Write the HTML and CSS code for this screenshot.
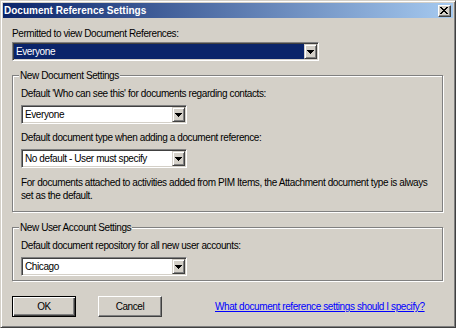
FILE: index.html
```html
<!DOCTYPE html>
<html lang="en">
<head>
  <meta charset="UTF-8" />
  <title>Document Reference Settings</title>
  <link rel="stylesheet" href="styles.css">
</head>
<body>

  <div class="window">
    <div class="titlebar">
      <span class="title">Document Reference Settings</span>
      <button class="close-btn" type="button" aria-label="Close">
        <svg width="8" height="7" viewBox="0 0 8 7" shape-rendering="crispEdges">
          <path d="M0 0h2v1H0z M6 0h2v1H6z M1 1h2v1H1z M5 1h2v1H5z M2 2h4v1H2z M3 3h2v1H3z M2 4h4v1H2z M1 5h2v1H1z M5 5h2v1H5z M0 6h2v1H0z M6 6h2v1H6z" fill="#000"/>
        </svg>
      </button>
    </div>

    <div class="content">
      <div class="row-label">Permitted to view Document References:</div>
      <div class="combo combo-wide is-active">
        <span class="combo-text">Everyone</span>
        <span class="combo-arrow">
          <svg width="7" height="4" viewBox="0 0 7 4" shape-rendering="crispEdges"><path d="M0 0h7v1H0z M1 1h5v1H1z M2 2h3v1H2z M3 3h1v1H3z" fill="#000"/></svg>
        </span>
      </div>

      <fieldset class="group group-docs">
        <legend>New Document Settings</legend>
        <div class="row-label">Default 'Who can see this' for documents regarding contacts:</div>
        <div class="combo">
          <span class="combo-text">Everyone</span>
          <span class="combo-arrow">
            <svg width="7" height="4" viewBox="0 0 7 4" shape-rendering="crispEdges"><path d="M0 0h7v1H0z M1 1h5v1H1z M2 2h3v1H2z M3 3h1v1H3z" fill="#000"/></svg>
          </span>
        </div>
        <div class="row-label">Default document type when adding a document reference:</div>
        <div class="combo">
          <span class="combo-text">No default - User must specify</span>
          <span class="combo-arrow">
            <svg width="7" height="4" viewBox="0 0 7 4" shape-rendering="crispEdges"><path d="M0 0h7v1H0z M1 1h5v1H1z M2 2h3v1H2z M3 3h1v1H3z" fill="#000"/></svg>
          </span>
        </div>
        <p class="note">For documents attached to activities added from PIM Items, the Attachment document type is always set as the default.</p>
      </fieldset>

      <fieldset class="group group-users">
        <legend>New User Account Settings</legend>
        <div class="row-label">Default document repository for all new user accounts:</div>
        <div class="combo">
          <span class="combo-text">Chicago</span>
          <span class="combo-arrow">
            <svg width="7" height="4" viewBox="0 0 7 4" shape-rendering="crispEdges"><path d="M0 0h7v1H0z M1 1h5v1H1z M2 2h3v1H2z M3 3h1v1H3z" fill="#000"/></svg>
          </span>
        </div>
      </fieldset>

      <div class="actions">
        <button class="btn btn-default" type="button">OK</button>
        <button class="btn" type="button">Cancel</button>
        <a class="help-link" href="#">What document reference settings should I specify?</a>
      </div>
    </div>
  </div>

</body>
</html>
```

FILE: styles.css
```css
* {
  margin: 0; padding: 0; box-sizing: border-box;
}

body {
  width: 456px; height: 328px;
  overflow: hidden;
  background: #d4d0c8;
  font-family: "Liberation Sans", Arial, sans-serif;
  font-size: 10px;
  letter-spacing: -0.4px;
  color: #000;
}

/* outer dialog frame, raised */
.window {
  width: 456px; height: 328px;
  background: #d4d0c8;
  border: 1px solid;
  border-color: #d4d0c8 #404040 #404040 #d4d0c8;
  box-shadow: inset 1px 1px #fff, inset -1px -1px #808080;
  padding: 2px;
  display: flex; flex-direction: column;
}

.titlebar {
  height: 15px;
  background: linear-gradient(to right, #0a246a, #a6caf0);
  display: flex; align-items: center; justify-content: space-between;
  padding: 0 2px 0 1px;
}

.title {
  color: #fff;
  font-weight: bold;
  font-size: 10px;
  letter-spacing: 0;
  line-height: 13px;
}

.close-btn {
  width: 13px; height: 12px;
  background: #d4d0c8;
  border: 1px solid;
  border-color: #fff #404040 #404040 #fff;
  box-shadow: inset -1px -1px #808080;
  display: flex; align-items: center; justify-content: center;
  padding-right: 1px;
}

.content {
  padding: 9px 10px 0 9px;
}

.row-label { line-height: 13px; }

/* sunken combo box */
.combo {
  display: flex;
  width: 166px; height: 19px;
  margin-top: 5px;
  background: #fff;
  border: 1px solid;
  border-color: #808080 #fff #fff #808080;
  box-shadow: inset 1px 1px #404040, inset -1px -1px #d4d0c8;
  padding: 1px;
}

.combo-wide { width: 307px; margin-top: 2px; }

.combo-text {
  flex: 1;
  line-height: 15px;
  padding-left: 2px;
  white-space: nowrap;
}

.is-active .combo-text { background: #0a246a; color: #fff; }

.combo-arrow {
  width: 13px; height: 15px;
  background: #d4d0c8;
  border: 1px solid;
  border-color: #d4d0c8 #404040 #404040 #d4d0c8;
  box-shadow: inset 1px 1px #fff, inset -1px -1px #808080;
  display: flex; align-items: center; justify-content: center;
}

.combo + .row-label { margin-top: 7px; }

/* etched group box */
.group {
  border: 1px solid #808080;
  box-shadow: inset 1px 1px #fff, 1px 1px #fff;
  min-width: 0;
}

.group legend {
  padding: 0 1px;
  margin-left: -2px;
  line-height: 13px;
  background: #d4d0c8;
}

.group-docs { margin-top: 8px; padding: 5px 8px 9px; }
.group-users { margin-top: 9px; padding: 5px 8px 4px; }

.note {
  margin-top: 8px;
  line-height: 13px;
}

.actions {
  display: flex; align-items: center;
  margin-top: 15px;
}

.btn {
  width: 64px; height: 21px;
  background: #d4d0c8;
  font-family: inherit; font-size: 10px; letter-spacing: -0.4px; color: #000;
  border: 1px solid;
  border-color: #fff #404040 #404040 #fff;
  box-shadow: inset -1px -1px #808080;
}

.btn + .btn { margin-left: 22px; }

.btn-default {
  border-color: #000;
  box-shadow: inset 1px 1px #fff, inset -1px -1px #404040, inset -2px -2px #808080;
}

.help-link {
  margin-left: 53px;
  color: #0000ff;
  text-decoration: underline;
}
```
